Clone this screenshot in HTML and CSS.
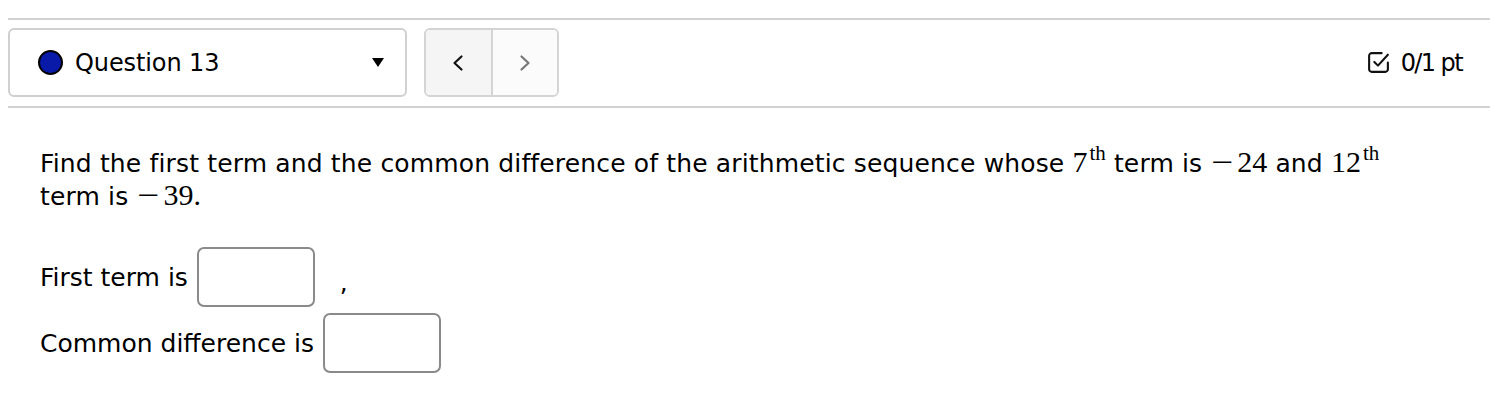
FILE: index.html
```html
<!DOCTYPE html>
<html>
<head>
<meta charset="utf-8">
<link rel="stylesheet" href="styles.css">
</head>
<body>
<div class="page">
  <header class="qbar">
    <div class="qselect">
      <span class="dot"></span>
      <span class="qlabel">Question 13</span>
      <span class="caret"></span>
    </div>
    <div class="nav">
      <button class="navbtn prev" aria-label="Previous">
        <svg width="14" height="18" viewBox="0 0 14 18"><path d="M10.5 2.5 L3.5 9 L10.5 15.5" fill="none" stroke="#111" stroke-width="2.2" stroke-linecap="round" stroke-linejoin="round"/></svg>
      </button>
      <button class="navbtn next" aria-label="Next">
        <svg width="14" height="18" viewBox="0 0 14 18"><path d="M3.5 2.5 L10.5 9 L3.5 15.5" fill="none" stroke="#777" stroke-width="2.2" stroke-linecap="round" stroke-linejoin="round"/></svg>
      </button>
    </div>
    <div class="points">
      <svg class="chk" width="25" height="25" viewBox="0 0 24 24"><path d="M15 3 H5.5 A2.5 2.5 0 0 0 3 5.5 V18.5 A2.5 2.5 0 0 0 5.5 21 H18.5 A2.5 2.5 0 0 0 21 18.5 V12" fill="none" stroke="#111" stroke-width="2" stroke-linecap="round" stroke-linejoin="round"/><path d="M8 11.5 L11.5 15 L21 4.5" fill="none" stroke="#111" stroke-width="2" stroke-linecap="round" stroke-linejoin="round"/></svg>
      <span class="pts">0/1 pt</span>
    </div>
  </header>

  <main class="question">
    <p class="prompt">Find the first term and the common difference of the arithmetic sequence whose <span class="m">7<sup>th</sup></span> term is <span class="m"><span class="minus">&minus;</span>24</span> and <span class="m">12<sup>th</sup></span> term is <span class="m"><span class="minus">&minus;</span>39.</span></p>
    <div class="row">
      <span class="lbl">First term is</span>
      <span class="field"></span>
      <span class="comma">,</span>
    </div>
    <div class="row">
      <span class="lbl">Common difference is</span>
      <span class="field"></span>
    </div>
  </main>
</div>
</body>
</html>
```

FILE: styles.css
```css
html, body {
  margin: 0;
  padding: 0;
  background: #fff;
}
body {
  font-family: "DejaVu Sans", Verdana, sans-serif;
  color: #000;
}
.page {
  padding-left: 8px;
}
.qbar {
  margin-top: 18px;
  border-top: 2px solid #d2d2d2;
  border-bottom: 2px solid #d2d2d2;
  padding: 8px 28px 9px 0;
  display: flex;
  align-items: center;
}
.qselect {
  box-sizing: border-box;
  width: 399px;
  height: 69px;
  border: 2px solid #d0d0d0;
  border-radius: 6px;
  display: flex;
  align-items: center;
  padding: 0 21px 0 28px;
}
.dot {
  box-sizing: border-box;
  width: 25px;
  height: 25px;
  border-radius: 50%;
  background: #0a1aa8;
  border: 2px solid #000;
  flex: none;
}
.qlabel {
  margin-left: 12px;
  font-size: 24px;
  letter-spacing: -0.1px;
  flex: 1;
}
.caret {
  width: 0;
  height: 0;
  border-left: 6.5px solid transparent;
  border-right: 6.5px solid transparent;
  border-top: 9px solid #000;
}
.nav {
  margin-left: 17px;
  box-sizing: border-box;
  width: 135px;
  height: 69px;
  border: 2px solid #d4d4d4;
  border-radius: 6px;
  display: flex;
  overflow: hidden;
}
.navbtn {
  flex: 1;
  border: 0;
  margin: 0;
  padding: 0;
  display: flex;
  align-items: center;
  justify-content: center;
}
.prev {
  background: #f5f5f5;
  border-right: 2px solid #d4d4d4;
}
.next {
  background: #fbfbfb;
}
.points {
  margin-left: auto;
  display: flex;
  align-items: center;
  gap: 10px;
}
.pts {
  font-size: 24px;
  letter-spacing: -1.6px;
}
.chk {
  display: block;
}
.question {
  padding: 39px 32px 0 32px;
  max-width: 1380px;
}
.prompt {
  margin: 0;
  font-size: 25px;
  line-height: 32px;
  letter-spacing: 0.15px;
}
.m {
  font-family: "Liberation Serif", "DejaVu Serif", serif;
  font-size: 30px;
  line-height: 1;
  letter-spacing: 0;
}
.minus {
  margin: 0 6px 0 4px;
  display: inline-block;
  transform: scaleX(1.3);
}
.m sup {
  font-size: 21px;
  line-height: 0;
  vertical-align: 0;
  position: relative;
  top: -12px;
  margin-left: 2px;
}
.row {
  display: flex;
  align-items: center;
  font-size: 25px;
  margin-top: 6px;
}
.prompt + .row {
  margin-top: 34px;
}
.lbl {
  margin-right: 9px;
}
.field {
  box-sizing: border-box;
  width: 118px;
  height: 60px;
  border: 2px solid #8a8a8a;
  border-radius: 7px;
  background: #fff;
}
.comma {
  margin-left: 25px;
  position: relative;
  top: 5px;
}
```
